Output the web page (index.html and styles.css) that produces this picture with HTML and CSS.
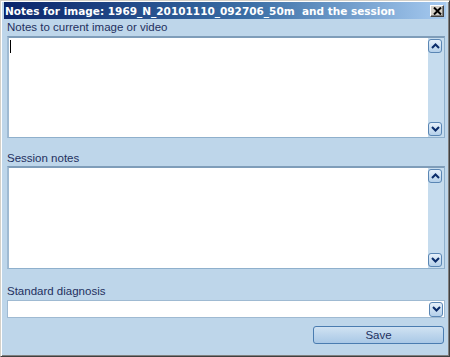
FILE: index.html
```html
<!DOCTYPE html>
<html>
<head>
<meta charset="utf-8">
<link rel="stylesheet" href="styles.css">
</head>
<body>
<div class="window">
  <div class="titlebar">
    <span class="title">Notes for image: 1969_N_20101110_092706_50m&nbsp; and the session</span>
    <span class="close"><svg width="9" height="8" viewBox="0 0 9 8"><path d="M1 0.5 L8 7.5 M8 0.5 L1 7.5" stroke="#000" stroke-width="2"/></svg></span>
  </div>
  <div class="content">
    <div class="label first">Notes to current image or video</div>
    <div class="memo m1">
      <div class="caret"></div>
      <div class="scroll">
        <span class="sbtn"><svg width="9" height="6" viewBox="0 0 9 6"><path d="M1 5 L4.5 1.5 L8 5" fill="none" stroke="#0a2c6a" stroke-width="2"/></svg></span>
        <span class="sbtn"><svg width="9" height="6" viewBox="0 0 9 6"><path d="M1 1 L4.5 4.5 L8 1" fill="none" stroke="#0a2c6a" stroke-width="2"/></svg></span>
      </div>
    </div>
    <div class="label second">Session notes</div>
    <div class="memo m2">
      <div class="scroll">
        <span class="sbtn"><svg width="9" height="6" viewBox="0 0 9 6"><path d="M1 5 L4.5 1.5 L8 5" fill="none" stroke="#0a2c6a" stroke-width="2"/></svg></span>
        <span class="sbtn"><svg width="9" height="6" viewBox="0 0 9 6"><path d="M1 1 L4.5 4.5 L8 1" fill="none" stroke="#0a2c6a" stroke-width="2"/></svg></span>
      </div>
    </div>
    <div class="label diag">Standard diagnosis</div>
    <div class="combo">
      <span class="sbtn"><svg width="9" height="6" viewBox="0 0 9 6"><path d="M1 1 L4.5 4.5 L8 1" fill="none" stroke="#0a2c6a" stroke-width="2"/></svg></span>
    </div>
    <div class="actions">
      <div class="save">Save</div>
    </div>
  </div>
</div>
</body>
</html>
```
FILE: styles.css
```css
html, body { margin: 0; padding: 0; }
body { width: 450px; height: 357px; overflow: hidden; background: #404040; }
.window {
  width: 450px; height: 357px; box-sizing: border-box;
  background: #bed6ea;
  border-left: 1px solid #d4d0c8;
  border-top: 1px solid #d4d0c8;
  border-right: 1px solid #404040;
  border-bottom: 1px solid #404040;
  box-shadow: inset 1px 1px 0 #fff, inset -1px -1px 0 #808080;
  padding: 1px 3px 3px 3px;
  display: flex; flex-direction: column;
}
.titlebar {
  height: 17px; flex: none;
  background: linear-gradient(to right, #0a246a 0%, #3a6ea5 55%, #a6caf0 100%);
  display: flex; align-items: center; justify-content: space-between;
  padding: 0 2px 0 1px;
}
.title {
  color: #fff; font-family: "DejaVu Sans", Verdana, sans-serif; font-weight: bold;
  font-size: 10.5px; white-space: nowrap;
}
.close {
  width: 14px; height: 12px; box-sizing: border-box;
  background: #d4d0c8;
  border-top: 1px solid #fff; border-left: 1px solid #fff;
  border-right: 1px solid #404040; border-bottom: 1px solid #404040;
  box-shadow: inset -1px -1px 0 #808080;
  display: flex; align-items: center; justify-content: center;
}
.content {
  flex: 1; display: flex; flex-direction: column;
  padding: 0 1px 0 3px;
}
.label {
  font-family: "Liberation Sans", Arial, sans-serif; font-size: 11.5px;
  color: #1e3060; height: 16px; line-height: 16px; margin-bottom: 1px;
}
.label.first { margin-top: 0; }
.label.second { margin-top: 12px; margin-bottom: 0; }
.label.diag { margin-top: 14px; }
.memo {
  height: 102px; box-sizing: border-box;
  background: #fff;
  border: 1px solid #8fb0cc;
  border-top: 2px solid #7f9db9;
  border-left: 2px solid #9fbad2;
  position: relative;
  display: flex; justify-content: flex-end;
}
.m2 { height: 103px; }
.caret {
  position: absolute; left: 1px; top: 2px; width: 1px; height: 13px; background: #000;
}
.scroll {
  width: 16px; background: #c6dcee;
  display: flex; flex-direction: column; justify-content: space-between;
  padding: 1px 0;
}
.sbtn {
  width: 14px; height: 14px; box-sizing: border-box;
  border: 1px solid #5a86b4; border-radius: 3px;
  background: linear-gradient(#e6f0fa, #b4d0ea);
  display: flex; align-items: center; justify-content: center;
}
.combo {
  height: 18px; box-sizing: border-box;
  background: #fff;
  border: 1px solid #9fbad2;
  display: flex; justify-content: flex-end; align-items: center;
  padding-right: 1px;
}
.combo .sbtn { height: 15px; }
.actions {
  display: flex; justify-content: flex-end; margin-top: 8px;
}
.save {
  width: 131px; height: 18px; box-sizing: border-box;
  border: 1px solid #4a7cb0; border-radius: 3px;
  background: linear-gradient(#d0e2f2, #a9c8e6);
  font-family: "Liberation Sans", Arial, sans-serif; font-size: 11.5px; color: #1e3060;
  display: flex; align-items: center; justify-content: center;
  margin-right: 1px;
}
```
